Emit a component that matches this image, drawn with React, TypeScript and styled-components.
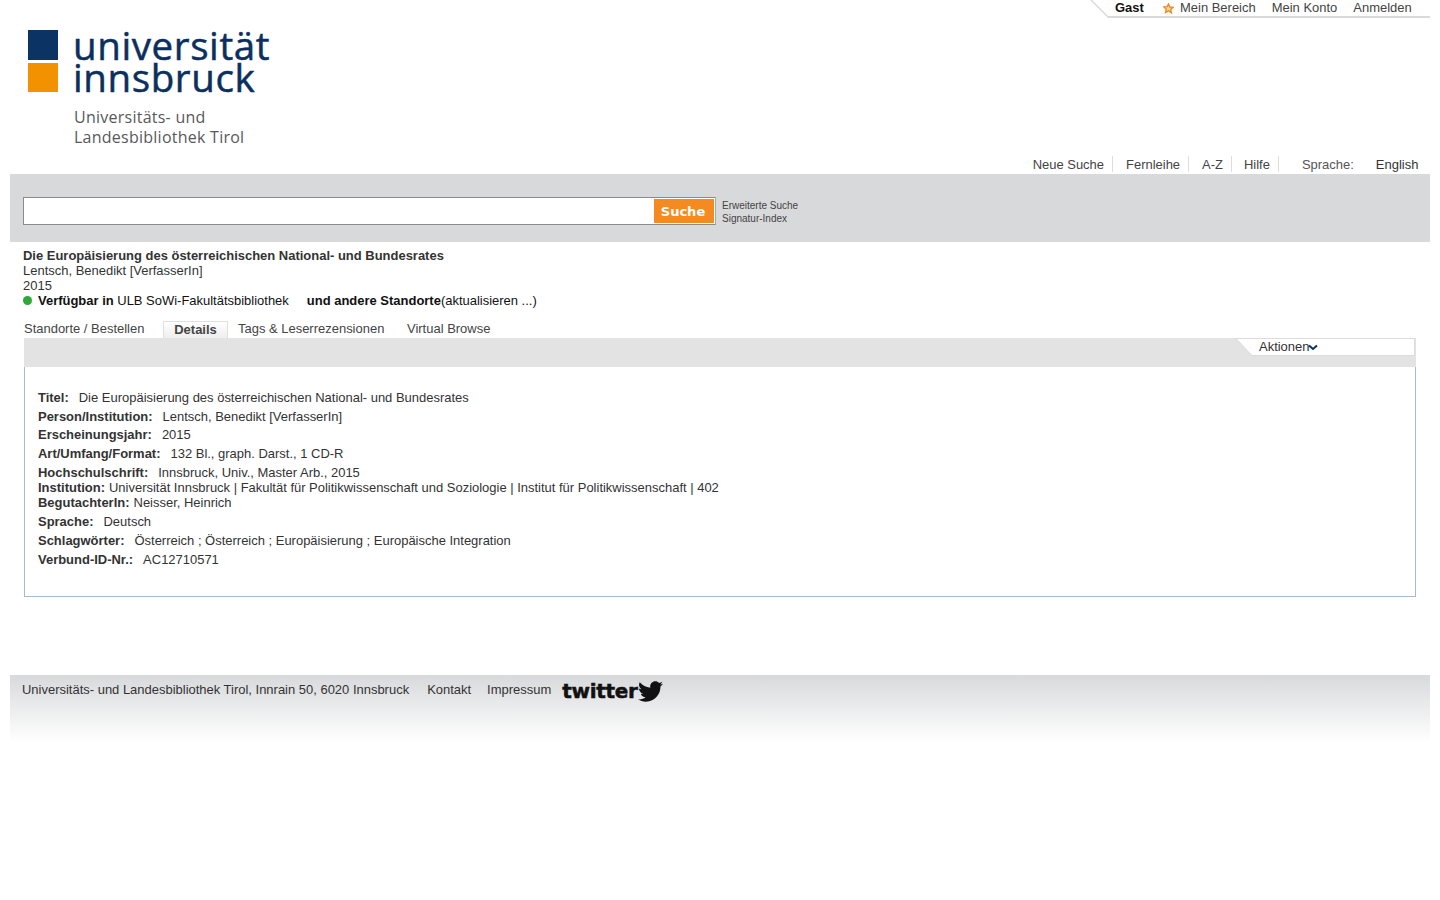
import React from "react";
import styled, { createGlobalStyle } from "styled-components";
import { FaTwitter } from "react-icons/fa";

const Global = createGlobalStyle`
  html, body { margin: 0; padding: 0; background: #fff; }
  body { font-family: "Liberation Sans", Arial, sans-serif; font-size: 12.98px; line-height: 15px; color: #333; }
`;
const Page = styled.div`
  padding: 0 10px;
  min-height: 900px;
  box-sizing: border-box;
`;
const Header = styled.header`
  height: 174px;
  display: flex;
  flex-direction: column;
`;
const TopRow = styled.div`
  display: flex;
  justify-content: flex-end;
`;
const UserBarEdge = styled.div`
  width: 340px;
  height: 18px;
  background: #d9d9d9;
  clip-path: polygon(0 0, 100% 0, 100% 100%, 18px 100%);
`;
const UserBar = styled.nav`
  height: 16px;
  background: #fff;
  clip-path: polygon(2px 0, 100% 0, 100% 100%, 18px 100%);
  display: flex;
  align-items: flex-start;
  padding: 0 0 0 25px;
`;
const UserName = styled.b`
  color: #111;
  margin-right: 19px;
  width: 29px;
  white-space: nowrap;
`;
const UserLink = styled.span<{ $gap?: number }>`
  color: #444;
  margin-right: ${(p) => p.$gap ?? 16}px;
  white-space: nowrap;
`;
const Star = styled.svg`
  width: 11px;
  height: 11px;
  margin-right: 6px;
  margin-top: 3px;
  flex: none;
`;
const Logo = styled.div`
  margin: 12px 0 0 18px;
  display: flex;
  gap: 16px;
  height: 116px;
`;
const Squares = styled.div`
  display: flex;
  flex-direction: column;
  gap: 3px;
`;
const Square = styled.div<{ $c: string; $h: number }>`
  width: 30px;
  height: ${(p) => p.$h}px;
  background: ${(p) => p.$c};
`;
const LogoText = styled.div`
  font-family: "Open Sans", "Noto Sans", sans-serif;
`;
const LogoNames = styled.div`
  display: flex;
  flex-direction: column;
  gap: 1px;
`;
const LogoName = styled.div`
  font-size: 38.5px;
  line-height: 31px;
  color: #0b2f5e;
  letter-spacing: 0.6px;
  -webkit-text-stroke: 0.5px #0b2f5e;
  white-space: nowrap;
  margin-left: -1px;
`;
const LogoSub = styled.div`
  margin-top: 14px;
  font-size: 16px;
  line-height: 20px;
  color: #58595b;
  letter-spacing: 0.25px;
  white-space: nowrap;
`;
const NavRow = styled.nav`
  margin-top: 11px;
  display: flex;
  justify-content: flex-end;
  padding-right: 11.6px;
  height: 14px;
  align-items: center;
`;
const NavItem = styled.span<{ $sep?: boolean; $left?: number }>`
  padding: 2px 8px 0 ${(p) => p.$left ?? 13}px;
  border-right: ${(p) => (p.$sep ? "1px solid #ddd" : "none")};
  color: #444;
  white-space: nowrap;
  line-height: 14px;
`;
const LangLabel = styled.span`
  color: #555;
  margin: 0 22px 0 23px;
  white-space: nowrap;
`;
const LangValue = styled.span`
  color: #333;
  white-space: nowrap;
`;
const SearchBand = styled.div`
  height: 68px;
  box-sizing: border-box;
  background: #d8d9db;
  display: flex;
  align-items: flex-start;
  padding: 23px 0 0 13px;
  gap: 6px;
`;
const SearchBox = styled.div`
  width: 693px;
  height: 28px;
  box-sizing: border-box;
  border: 1px solid #8a8a8a;
  border-right-color: #aaa;
  background: #fff;
  display: flex;
  justify-content: flex-end;
  padding: 1px;
`;
const SearchButton = styled.div`
  width: 60px;
  height: 24px;
  box-sizing: border-box;
  padding-right: 2px;
  background: #f58b20;
  color: #fff;
  font: bold 13px/25px "DejaVu Sans", sans-serif;
  text-align: center;
`;
const SearchLinks = styled.div`
  font-size: 10px;
  line-height: 13px;
  color: #444;
  padding-top: 2px;
`;
const Main = styled.main`
  padding: 6px 14px 0 13px;
`;
const Title = styled.div`
  font-weight: bold;
`;
const Availability = styled.div`
  display: flex;
  align-items: center;
  color: #111;
  white-space: pre;
`;
const Dot = styled.span`
  width: 9px;
  height: 9px;
  border-radius: 50%;
  background: #2ea836;
  margin-right: 6px;
`;
const Tabs = styled.div`
  display: flex;
  align-items: flex-end;
  margin: 13px 0 0 1px;
  height: 17px;
  color: #444;
`;
const Tab = styled.div<{ $w: number }>`
  width: ${(p) => p.$w}px;
  line-height: 15px;
  padding-bottom: 2px;
  white-space: nowrap;
`;
const ActiveTab = styled.div`
  width: 65px;
  box-sizing: border-box;
  height: 17px;
  border: 1px solid #e0e0e0;
  border-bottom: none;
  background: linear-gradient(#fff, #eee);
  font-weight: bold;
  text-align: center;
  line-height: 15px;
  margin-right: 10px;
`;
const ToolBar = styled.div`
  margin-left: 1px;
  height: 29px;
  background: #e3e3e3;
  display: flex;
  justify-content: flex-end;
  padding-right: 1px;
`;
const ActionsEdge = styled.div`
  width: 180px;
  height: 18px;
  background: #dcdcdc;
  clip-path: polygon(0 0, 100% 0, 100% 100%, 17px 100%);
`;
const Actions = styled.div`
  height: 16px;
  margin: 1px 1px 0 0;
  padding-left: 24px;
  background: #fff;
  clip-path: polygon(2px 0, 100% 0, 100% 100%, 17px 100%);
  display: flex;
  align-items: flex-start;
  color: #333;
`;
const Chevron = styled.svg`
  width: 10px;
  height: 7px;
  margin: 5px 0 0 -1px;
`;
const Details = styled.section`
  margin-left: 1px;
  height: 230px;
  box-sizing: border-box;
  border: 1px solid #a3bccb;
  border-top: none;
  padding: 22.7px 13px 0;
`;
const Row = styled.div`
  margin-bottom: 3.9px;
  white-space: nowrap;
`;
const Label = styled.b<{ $tight?: boolean }>`
  margin-right: ${(p) => (p.$tight ? 4 : 10)}px;
`;
const Footer = styled.footer`
  margin-top: 78px;
  height: 60px;
  background: linear-gradient(#d8d9db, #fff);
  padding: 7px 12px 0;
  display: flex;
  color: #333;
  white-space: nowrap;
`;
const FootLink = styled.span<{ $gap: number }>`
  margin-right: ${(p) => p.$gap}px;
`;
const Twitter = styled.span`
  display: flex;
  align-items: center;
  height: 18px;
  color: #111;
  font: bold 20px/18px "DejaVu Sans", sans-serif;
  letter-spacing: -0.3px;
  -webkit-text-stroke: 0.5px #111;
`;
const Bird = styled(FaTwitter)`
  width: 25px;
  height: 25px;
  flex: none;
`;

export default function App() {
  return (
    <Page>
      <Global />
      <Header>
        <TopRow>
          <UserBarEdge>
            <UserBar>
              <UserName>Gast</UserName>
              <Star viewBox="0 0 24 24">
                <path d="M12 2l3 6.8 7.3.7-5.5 4.9 1.6 7.2L12 17l-6.400 3.600 1.600-7.200L1.700 8.500 9 7.800z" fill="#fbd7a8" stroke="#ee8a1e" strokeWidth="3" />
              </Star>
              <UserLink>Mein Bereich</UserLink>
              <UserLink>Mein Konto</UserLink>
              <UserLink $gap={0}>Anmelden</UserLink>
            </UserBar>
          </UserBarEdge>
        </TopRow>
        <Logo>
          <Squares>
            <Square $c="#0b3364" $h={30} />
            <Square $c="#f39200" $h={29} />
          </Squares>
          <LogoText>
            <LogoNames>
              <LogoName>universität</LogoName>
              <LogoName>innsbruck</LogoName>
            </LogoNames>
            <LogoSub>
              Universitäts- und
              <br />
              Landesbibliothek Tirol
            </LogoSub>
          </LogoText>
        </Logo>
        <NavRow>
          <NavItem $sep $left={0}>Neue Suche</NavItem>
          <NavItem $sep>Fernleihe</NavItem>
          <NavItem $sep>A-Z</NavItem>
          <NavItem $sep $left={12}>Hilfe</NavItem>
          <LangLabel>Sprache:</LangLabel>
          <LangValue>English</LangValue>
        </NavRow>
      </Header>
      <SearchBand>
        <SearchBox>
          <SearchButton>Suche</SearchButton>
        </SearchBox>
        <SearchLinks>
          Erweiterte Suche
          <br />
          Signatur-Index
        </SearchLinks>
      </SearchBand>
      <Main>
        <Title>Die Europäisierung des österreichischen National- und Bundesrates</Title>
        <div>Lentsch, Benedikt [VerfasserIn]</div>
        <div>2015</div>
        <Availability>
          <Dot />
          <b>Verfügbar in</b> ULB SoWi-Fakultätsbibliothek{"     "}
          <b>und andere Standorte</b>(aktualisieren ...)
        </Availability>
        <Tabs>
          <Tab $w={139}>Standorte / Bestellen</Tab>
          <ActiveTab>Details</ActiveTab>
          <Tab $w={169}>Tags &amp; Leserrezensionen</Tab>
          <Tab $w={90}>Virtual Browse</Tab>
        </Tabs>
        <ToolBar>
          <ActionsEdge>
            <Actions>
              Aktionen
              <Chevron viewBox="0 0 10 7">
                <path d="M1 1.500l4 3.500 4-3.500" fill="none" stroke="#0b2f5e" strokeWidth="2" />
              </Chevron>
            </Actions>
          </ActionsEdge>
        </ToolBar>
        <Details>
          <Row><Label>Titel:</Label>Die Europäisierung des österreichischen National- und Bundesrates</Row>
          <Row><Label>Person/Institution:</Label>Lentsch, Benedikt [VerfasserIn]</Row>
          <Row><Label>Erscheinungsjahr:</Label>2015</Row>
          <Row><Label>Art/Umfang/Format:</Label>132 Bl., graph. Darst., 1 CD-R</Row>
          <Row>
            <Label>Hochschulschrift:</Label>Innsbruck, Univ., Master Arb., 2015
            <br />
            <Label $tight>Institution:</Label>Universität Innsbruck | Fakultät für Politikwissenschaft und Soziologie | Institut für Politikwissenschaft | 402
            <br />
            <Label $tight>BegutachterIn:</Label>Neisser, Heinrich
          </Row>
          <Row><Label>Sprache:</Label>Deutsch</Row>
          <Row><Label>Schlagwörter:</Label>Österreich ; Österreich ; Europäisierung ; Europäische Integration</Row>
          <Row><Label>Verbund-ID-Nr.:</Label>AC12710571</Row>
        </Details>
      </Main>
      <Footer>
        <FootLink $gap={18}>Universitäts- und Landesbibliothek Tirol, Innrain 50, 6020 Innsbruck</FootLink>
        <FootLink $gap={16}>Kontakt</FootLink>
        <FootLink $gap={11}>Impressum</FootLink>
        <Twitter>twitter<Bird /></Twitter>
      </Footer>
    </Page>
  );
}
